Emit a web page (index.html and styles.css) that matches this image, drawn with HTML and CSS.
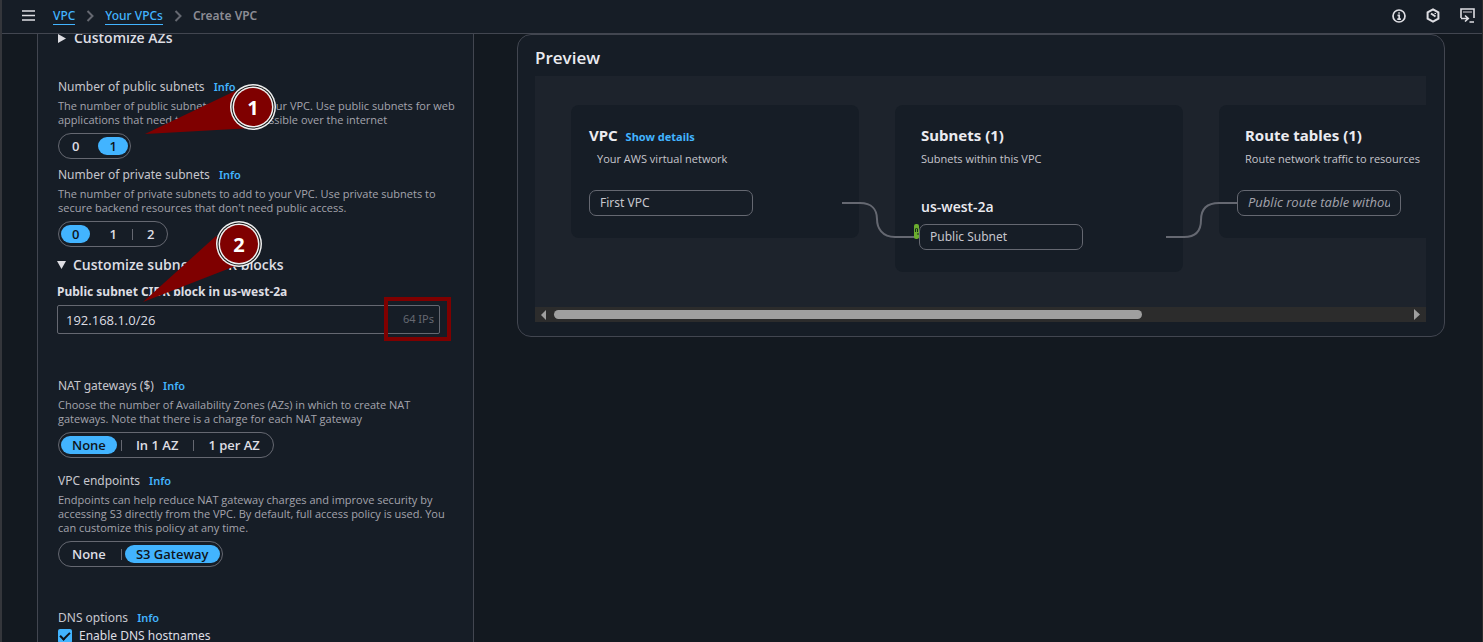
FILE: index.html
```html
<!DOCTYPE html>
<html lang="en">
<head>
<meta charset="utf-8">
<title>Create VPC</title>
<link rel="stylesheet" href="styles.css">
</head>
<body>
<header class="topbar">
  <button class="icon-btn menu" aria-label="Open navigation">
    <svg width="13" height="11" viewBox="0 0 13 11" stroke="#dedee3" stroke-width="1.6"><path d="M0 1h13M0 5.500h13M0 10h13"/></svg>
  </button>
  <nav class="crumbs" aria-label="Breadcrumb">
    <a href="#vpc">VPC</a>
    <svg width="8" height="12" viewBox="0 0 8 12" fill="none" stroke="#656871" stroke-width="2"><path d="M1.500 1l5 5-5 5"/></svg>
    <a href="#vpcs">Your VPCs</a>
    <svg width="8" height="12" viewBox="0 0 8 12" fill="none" stroke="#656871" stroke-width="2"><path d="M1.500 1l5 5-5 5"/></svg>
    <span>Create VPC</span>
  </nav>
  <div class="tools">
    <button class="icon-btn" aria-label="Information">
      <svg width="14" height="14" viewBox="0 0 14 14" fill="none" stroke="#dedee3" stroke-width="1.700"><circle cx="7" cy="7" r="6"/><path d="M5.500 6.300H7.200V10M5.300 10.200h3.600M6.300 4h1.500"/></svg>
    </button>
    <button class="icon-btn" aria-label="Diagnostics">
      <svg width="14" height="15" viewBox="0 0 14 15" fill="none" stroke="#dedee3" stroke-width="2"><path d="M7 1.300l5.400 3.100v6.200L7 13.700l-5.400-3.100V4.400z"/><path d="M5 5.500L9.500 8.500" stroke-width="2"/><path d="M8.500 5.500h1.500" stroke-width="1"/></svg>
    </button>
    <button class="icon-btn" aria-label="CloudShell">
      <svg width="15" height="15" viewBox="0 0 15 15" fill="none" stroke="#dedee3" stroke-width="1.600"><path d="M1 10V1h13v9M1 10.500h7M5 7.500l3.300 3L5 13.500M9.500 14H14"/><path d="M3 4h9" stroke="#8c8c94"/></svg>
    </button>
  </div>
</header>

<main class="page">
  <form class="settings">
    <button type="button" class="expander first"><svg width="8" height="9" viewBox="0 0 8 9" fill="#dedee3"><path d="M0 0l8 4.500L0 9z"/></svg>Customize AZs</button>

    <section class="field public">
      <h3>Number of public subnets <a href="#i1">Info</a></h3>
      <p>The number of public subnets to add to your VPC. Use public subnets for web<br>applications that need to be publicly accessible over the internet</p>
      <div class="segments" role="group" aria-label="Number of public subnets">
        <button type="button">0</button><button type="button" class="on" aria-pressed="true">1</button>
      </div>
      <svg class="callout one" width="134" height="54" viewBox="0 0 134 54" role="img" aria-label="Step 1">
        <path d="M2 53L92 10L110 47z" fill="#7f0000"/>
        <circle cx="110" cy="26" r="23" fill="#f0f0f0"/><circle cx="110" cy="26" r="21.500" fill="#111"/><circle cx="110" cy="26" r="20.500" fill="#f0f0f0"/><circle cx="110" cy="26" r="19" fill="#7f0000"/>
        <text x="110" y="34">1</text>
      </svg>
    </section>

    <section class="field">
      <h3>Number of private subnets <a href="#i2">Info</a></h3>
      <p>The number of private subnets to add to your VPC. Use private subnets to<br>secure backend resources that don't need public access.</p>
      <div class="segments" role="group" aria-label="Number of private subnets">
        <button type="button" class="on" aria-pressed="true">0</button><button type="button">1</button><button type="button" class="split">2</button>
      </div>
    </section>

    <section class="cidr">
      <button type="button" class="expander"><svg width="9" height="8" viewBox="0 0 9 8" fill="#dedee3"><path d="M0 0h9L4.500 8z"/></svg>Customize subnets CIDR blocks</button>
      <label for="cidr">Public subnet CIDR block in us-west-2a</label>
      <div class="inputwrap">
        <input id="cidr" type="text" value="192.168.1.0/26">
        <span class="suffix">64 IPs</span>
        <span class="highlight"></span>
      </div>
      <svg class="callout two" width="122" height="84" viewBox="0 0 122 84" role="img" aria-label="Step 2">
        <path d="M2 82L75 16L97 45z" fill="#7f0000"/>
        <circle cx="98" cy="24" r="23" fill="#f0f0f0"/><circle cx="98" cy="24" r="21.500" fill="#111"/><circle cx="98" cy="24" r="20.500" fill="#f0f0f0"/><circle cx="98" cy="24" r="19" fill="#7f0000"/>
        <text x="98" y="32">2</text>
      </svg>
    </section>

    <section class="field nat">
      <h3>NAT gateways ($) <a href="#i3">Info</a></h3>
      <p>Choose the number of Availability Zones (AZs) in which to create NAT<br>gateways. Note that there is a charge for each NAT gateway</p>
      <div class="segments" role="group" aria-label="NAT gateways">
        <button type="button" class="on" aria-pressed="true">None</button><button type="button" class="split">In 1 AZ</button><button type="button" class="split">1 per AZ</button>
      </div>
    </section>

    <section class="field endpoints">
      <h3>VPC endpoints <a href="#i4">Info</a></h3>
      <p>Endpoints can help reduce NAT gateway charges and improve security by<br>accessing S3 directly from the VPC. By default, full access policy is used. You<br>can customize this policy at any time.</p>
      <div class="segments" role="group" aria-label="VPC endpoints">
        <button type="button">None</button><button type="button" class="on split" aria-pressed="true">S3 Gateway</button>
      </div>
    </section>

    <section class="field dns">
      <h3>DNS options <a href="#i5">Info</a></h3>
      <label class="check"><input type="checkbox" checked>Enable DNS hostnames</label>
    </section>
  </form>

  <section class="preview">
    <h2>Preview</h2>
    <div class="viewport">
      <div class="canvas">
        <article class="card">
          <h3>VPC <a href="#details">Show details</a></h3>
          <p class="inset">Your AWS virtual network</p>
          <button class="node"><span>First VPC</span></button>
        </article>
        <article class="card">
          <h3 class="inset">Subnets (1)</h3>
          <p class="inset">Subnets within this VPC</p>
          <h4 class="inset">us-west-2a</h4>
          <button class="node shifted"><span>Public Subnet</span></button>
        </article>
        <article class="card">
          <h3 class="inset">Route tables (1)</h3>
          <p class="inset">Route network traffic to resources</p>
          <button class="node"><span><em>Public route table without associations</em></span></button>
        </article>
        <svg class="links" width="400" height="50" viewBox="0 0 400 50" fill="none" stroke="#656871" stroke-width="2">
          <path d="M0 9h18c12 0 17 7 17 16s5 18 18 18h24"/>
          <path d="M324 43h18c12 0 17-7 17-17s5-17 18-17h19"/>
          <rect x="72" y="30" width="5" height="15" rx="2" fill="#6cae2f" stroke="none"/>
          <path d="M73.500 38v-3q1-2 2 0v3M75 40h2" stroke="#16301a" stroke-width="1"/>
        </svg>
      </div>
      <div class="scrollbar">
        <button aria-label="Scroll left"><svg width="5" height="10" viewBox="0 0 5 10" fill="#9f9f9f"><path d="M5 0v10L0 5z"/></svg></button>
        <div class="track"><div class="thumb"></div></div>
        <button aria-label="Scroll right"><svg width="6" height="11" viewBox="0 0 6 11" fill="#9f9f9f"><path d="M0 0v11l6-5.500z"/></svg></button>
      </div>
    </div>
  </section>
</main>
</body>
</html>
```
FILE: styles.css
```css
* { box-sizing: border-box; }
html, body { height: 100%; }
body {
  margin: 0;
  display: flex;
  flex-direction: column;
  overflow: hidden;
  background: #131920;
  border-left: 2px solid #34363b;
  border-right: 1px solid #2c2c2c;
  color: #c6c6cd;
  font: 12px/20px "Noto Sans", "Open Sans", sans-serif;
}
h2, h3, h4, p { margin: 0; }
button { font: inherit; color: inherit; background: none; border: 0; padding: 0; }
a { color: #42b4ff; text-decoration: none; }
svg { display: block; flex: none; }

.topbar {
  display: flex;
  align-items: center;
  flex: none;
  height: 34px;
  padding: 0 7px 2px 20px;
  background: #161d26;
  border-bottom: 1px solid #424650;
}
.crumbs { display: flex; align-items: center; gap: 11px; margin-left: 18px; color: #8c8c94; font-weight: 600; line-height: 16px; }
.crumbs a { padding-top: 1px; border-bottom: 1px solid #42b4ff; font-weight: 500; }
.tools { display: flex; align-items: center; gap: 20px; margin-left: auto; }

.page {
  flex: 1;
  min-height: 0;
  display: grid;
  grid-template-columns: 437fr 928fr;
  gap: 43px;
  padding: 0 37px 0 35px;
  overflow: hidden;
}

.settings {
  overflow: hidden;
  padding: 0 19px 0 20px;
  background: #161d26;
  border: solid #424650;
  border-width: 0 1px;
}
.expander { display: flex; align-items: center; gap: 7px; font: 600 14px/20px "Open Sans", sans-serif; color: #dedee3; }
.expander.first { margin-top: -6px; gap: 8px; }
.field { position: relative; margin-top: 6px; }
.public { margin-top: 29px; }
.nat { margin-top: 42px; }
.endpoints { margin-top: 13px; }
.dns { margin-top: 41px; }
.field h3 { font-size: 12px; font-weight: 400; line-height: 20px; }
.field h3 a { margin-left: 6px; font-size: 11px; font-weight: 600; }
.field p { margin: 2px 0 6px; font: 11px/14px "Open Sans", sans-serif; color: #a4a4ad; white-space: nowrap; }

.segments {
  display: inline-flex;
  gap: 8px;
  height: 26px;
  padding: 3px 2px;
  border: 1px solid #656871;
  border-radius: 13px;
  vertical-align: top;
}
.segments button { position: relative; padding: 0 11px; border-radius: 9px; font: 600 13px/18px "Open Sans", sans-serif; color: #dedee3; }
.segments .on { background: #42b4ff; color: #0f141a; }
.segments .split::before { content: ""; position: absolute; left: -4px; top: 4px; width: 1px; height: 11px; background: #656871; }

.cidr { position: relative; margin: 8px 0 0 -1px; }
.cidr label { display: block; margin: 7px 0 3px; font-weight: 700; color: #dedee3; }
.inputwrap { position: relative; margin-right: 14px; }
.inputwrap input {
  display: block;
  width: 100%;
  height: 29px;
  padding: 0 60px 0 8px;
  font: 13px "Open Sans", sans-serif;
  color: #dedee3;
  background: #161d26;
  border: 1px solid #656871;
  border-radius: 2px;
}
.suffix { position: absolute; right: 6px; top: 4px; font-size: 11px; color: #656871; }
.highlight { position: absolute; right: -11px; top: -8px; width: 67px; height: 44px; border: 4px solid #7f0000; }
.callout { position: absolute; z-index: 2; }
.callout.one { left: 85px; top: 4px; }
.callout.two { left: 84px; top: -35px; }
.callout text { font-size: 20px; font-weight: 700; fill: #fff; text-anchor: middle; }

.check { display: flex; align-items: center; gap: 7px; color: #dedee3; line-height: 16px; }
.check input { width: 14px; height: 14px; margin: 0; appearance: none; border-radius: 2px; background: #42b4ff; display: grid; place-items: center; }
.check input::before { content: ""; width: 8px; height: 4px; margin-bottom: 2px; border: solid #0f141a; border-width: 0 0 2px 2px; transform: rotate(-45deg); }

.preview {
  align-self: start;
  min-width: 0;
  padding: 11px 18px 14px 17px;
  background: #161d26;
  border: 1px solid #424650;
  border-radius: 14px;
}
.preview h2 { font: 600 17px/24px "Open Sans", sans-serif; color: #ebebf0; margin-bottom: 6px; }
.viewport { background: #1d232c; }
.canvas { position: relative; display: flex; align-items: flex-start; gap: 36px; height: 231px; padding: 29px 36px; overflow: hidden; }
.card { flex: none; width: 288px; padding: 19px 18px 22px; background: #161d26; border-radius: 8px; }
.card h3 { height: 22px; font-size: 15px; line-height: 22px; color: #ebebf0; }
.card h3 a { margin-left: 4px; font-size: 11px; }
.card h4 { margin: 30px 0 7px; font: 600 14px/20px "Open Sans", sans-serif; color: #ebebf0; }
.card p { margin-top: 5px; font: 11px/16px "Open Sans", sans-serif; }
.card .inset { padding-left: 8px; }
.node { display: block; width: 164px; height: 26px; margin-top: 23px; padding: 0 10px; text-align: left; border: 1px solid #656871; border-radius: 7px; }
.node span { display: block; overflow: hidden; white-space: nowrap; }
.node em { font: italic 13px "Open Sans", sans-serif; color: #a4a4ad; }
.node.shifted { margin: 0 0 0 6px; }
.links { position: absolute; left: 307px; top: 118px; }

.scrollbar { display: flex; align-items: center; height: 15px; padding: 0 6px; background: #2c2c2c; }
.track { flex: 1; margin: 0 8px; }
.thumb { width: 69%; height: 9px; border-radius: 5px; background: #9f9f9f; }
```
